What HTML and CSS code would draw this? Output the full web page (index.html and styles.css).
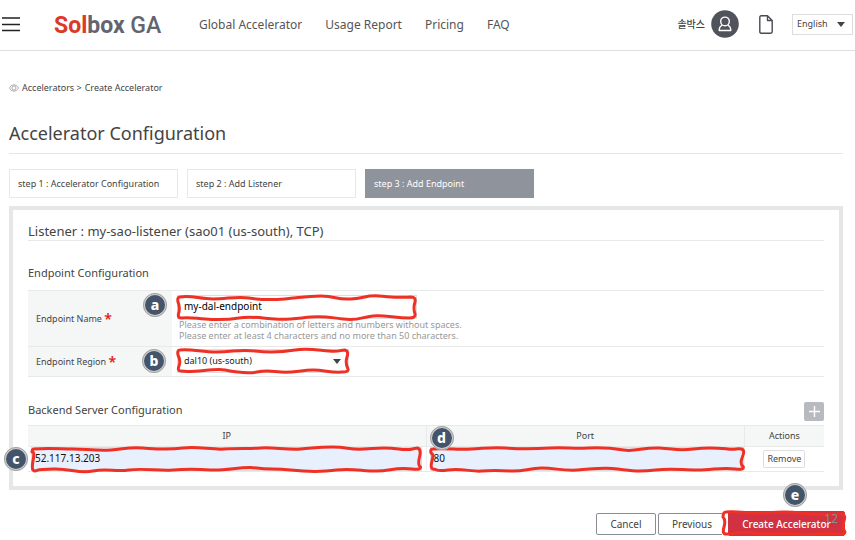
FILE: index.html
```html
<!DOCTYPE html>
<html lang="en">
<head>
<meta charset="utf-8">
<title>Solbox GA</title>
<link rel="stylesheet" href="styles.css">
</head>
<body>
<header class="topbar">
  <button class="menu" type="button" aria-label="Menu">
    <svg width="18" height="15" viewBox="0 0 18 15"><path d="M0 1h18M0 7.5h18M0 13.5h18" stroke="#222" stroke-width="1.3"/></svg>
  </button>
  <a class="logo" href="#"><span class="logo-accent">Sol</span>box <span class="logo-ga">GA</span></a>
  <nav class="nav">
    <a href="#">Global Accelerator</a>
    <a href="#">Usage Report</a>
    <a href="#">Pricing</a>
    <a href="#">FAQ</a>
  </nav>
  <div class="account">
    <span class="user">솔박스</span>
    <svg class="avatar" width="28" height="28" viewBox="0 0 28 28"><circle cx="14" cy="14" r="13.8" fill="#50535b"/><g fill="none" stroke="#fff" stroke-width="1.4" stroke-linejoin="round"><circle cx="14" cy="11.4" r="4.3"/><path d="M11.300 15.200C9.300 16 8.200 17.800 8.200 20.500H19.800C19.800 17.800 18.700 16 16.700 15.200"/></g></svg>
    <svg class="doc" width="14" height="19" viewBox="0 0 14 19"><path d="M.8 2.200Q.8 .8 2.200 .8H8.500L13.200 5.500V16.800Q13.200 18.200 11.800 18.200H2.200Q.8 18.200 .8 16.800ZM8.500 .8V5.500H13.200" fill="none" stroke="#484b52" stroke-width="1.4" stroke-linejoin="round"/></svg>
    <span class="pick lang"><select aria-label="Language"><option>English</option></select></span>
  </div>
</header>

<main class="page">
  <nav class="crumbs" aria-label="Breadcrumb">
    <svg width="10" height="8" viewBox="0 0 10 8" fill="none" stroke="#777" stroke-width=".6"><path d="M.4 4Q2.200 .7 5 .7T9.600 4Q7.800 7.300 5 7.300T.4 4Z"/><circle cx="5" cy="4" r="2"/></svg>
    <a href="#">Accelerators &gt;</a>
    <span>Create Accelerator</span>
  </nav>
  <h1>Accelerator Configuration</h1>
  <ol class="steps">
    <li>step 1 : Accelerator Configuration</li>
    <li>step 2 : Add Listener</li>
    <li class="current">step 3 : Add Endpoint</li>
  </ol>

  <section class="panel">
    <h2>Listener : my-sao-listener (sao01 (us-south), TCP)</h2>
    <h3 class="first">Endpoint Configuration</h3>
    <table class="form">
      <tr>
        <th scope="row"><label for="name">Endpoint Name <b>*</b></label><span class="badge badge-a">a</span></th>
        <td>
          <div class="marked name">
            <input id="name" type="text" value="my-dal-endpoint">
            <svg class="mark" viewBox="0 0 240 24" preserveAspectRatio="none"><path d="M3 2C15 0 22 4 36 4S60 1 72 3S94 5 108 4S128 1 144 1S158 5 174 4S188 0 202 1S220 3 234 2Q239 2 238 7Q236 13 238 19Q239 23 232 23C218 23 208 20 196 21S182 26 166 24S146 21 134 22S112 25 98 24S74 21 62 23S40 25 28 24S12 22 4 23Q0 23 2 17Q3 11 1 7Q0 2 3 2Z"/></svg>
          </div>
          <p class="hint">Please enter a combination of letters and numbers without spaces.<br>Please enter at least 4 characters and no more than 50 characters.</p>
        </td>
      </tr>
      <tr>
        <th scope="row"><label for="region">Endpoint Region <b>*</b></label><span class="badge badge-b">b</span></th>
        <td>
          <div class="marked pick region">
            <select id="region"><option>dal10 (us-south)</option></select>
            <svg class="mark" viewBox="0 0 172 24" preserveAspectRatio="none"><path d="M3 1C16 0 24 3 40 3S62 0 78 2S106 3 118 1S140 1 152 2S162 1 168 1Q172 2 170 8T171 20Q172 23 165 23C154 24 148 21 136 21S116 24 104 23S90 21 80 23S58 23 48 21S16 24 4 22Q0 22 2 17T1 6Q0 1 3 1Z"/></svg>
          </div>
        </td>
      </tr>
    </table>

    <div class="subhead">
      <h3>Backend Server Configuration</h3>
      <button class="add" type="button" aria-label="Add server"><svg width="11" height="11" viewBox="0 0 11 11"><path d="M5.500 0V11M0 5.500H11" stroke="#fff" stroke-width="1.400"/></svg></button>
    </div>
    <table class="servers">
      <thead><tr><th class="ip">IP</th><th>Port<span class="badge badge-d">d</span></th><th class="actions">Actions</th></tr></thead>
      <tbody><tr>
        <td><div class="marked cell">
          <input type="text" aria-label="IP" value="52.117.13.203">
          <svg class="mark" viewBox="0 0 391 24" preserveAspectRatio="none"><path d="M3 2C18 1 30 2 42 2S66 4 80 3S96 0 112 1S136 3 152 1S180 3 194 2S218 2 230 1S256 3 270 2S286 0 302 0S318 3 334 2S354 0 368 2S382 1 387 1Q391 2 389 10T390 20Q390 23 382 22C364 20 360 24 346 24S320 21 306 23S278 25 260 23S240 23 226 21S196 24 180 23S156 22 142 23S112 21 98 23S76 21 62 24S38 21 22 22S10 22 4 24Q0 24 2 14T1 5Q1 2 3 2Z"/></svg>
          <span class="badge badge-c">c</span>
        </div></td>
        <td><div class="marked cell port">
          <input type="text" aria-label="Port" value="80">
          <svg class="mark" viewBox="0 0 315 24" preserveAspectRatio="none"><path d="M3 2C18 1 26 3 42 2S62 0 76 1S104 2 120 1S144 2 158 1S182 1 194 3S214 0 230 1S248 4 264 2S288 1 298 2S306 1 312 2Q316 3 313 10T314 20Q314 23 306 22C292 20 284 23 268 23S242 21 226 23S202 24 188 22S164 22 148 23S126 21 112 21S94 25 80 24S62 23 52 24S32 21 18 23S8 22 3 22Q0 21 2 14T1 6Q0 2 3 2Z"/></svg>
        </div></td>
        <td><button class="remove" type="button">Remove</button></td>
      </tr></tbody>
    </table>
  </section>

  <div class="buttons">
    <button type="button">Cancel</button>
    <button type="button">Previous</button>
    <div class="marked create">
      <button class="primary" type="button">Create Accelerator</button>
      <svg class="mark" viewBox="0 0 124 25" preserveAspectRatio="none"><path d="M4 1C18 0 28 3 42 2S64 0 78 2S104 3 120 3Q124 4 122 10T123 21Q123 24 116 23C100 21 90 25 74 23S48 25 32 22S14 24 4 23Q0 23 2 16T1 6Q1 1 4 1Z"/></svg>
      <span class="badge badge-e">e</span>
      <span class="page-number">12</span>
    </div>
  </div>
</main>
</body>
</html>
```
FILE: styles.css
```css
* { box-sizing: border-box; }
body {
  margin: 0;
  background: #fff;
  color: #444;
  font: 9px/12px "Noto Sans", "Noto Sans CJK KR", sans-serif;
}
a { color: inherit; text-decoration: none; }
button, input, select { font: inherit; color: inherit; margin: 0; }
h1, h2, h3, p, ol { margin: 0; padding: 0; font-weight: 400; }
svg { display: block; flex: none; }
table { width: 100%; border-collapse: collapse; table-layout: fixed; }
th { font-weight: 400; }
th, td { padding: 0; position: relative; }

.topbar {
  display: flex;
  align-items: center;
  height: 51px;
  padding: 0 2px 2px;
  border-bottom: 1px solid #dedede;
}
.menu { padding: 0; border: 0; background: none; }
.logo {
  margin-left: 34px;
  padding-top: 3px;
  width: 145px;
  font: 700 23px/28px Roboto, sans-serif;
  color: #62656e;
  white-space: nowrap;
}
.logo-accent { color: #db3b26; }
.logo-ga { font-weight: 500; }
.nav { display: flex; gap: 23px; padding-top: 2px; font-size: 12px; line-height: 16px; color: #555; white-space: nowrap; }
.account { display: flex; align-items: center; margin-left: auto; }
.user { font-size: 10px; font-weight: 500; margin-right: 6px; color: #444; }
.doc { margin: 0 19px 0 20px; }

.pick { display: block; position: relative; }
.pick select { appearance: none; width: 100%; border: 1px solid #ddd; border-radius: 0; background: #fff; padding: 0 4px; }
.pick::after {
  content: "";
  position: absolute;
  right: 8px;
  top: 50%;
  margin-top: -2px;
  border: 4px solid transparent;
  border-top: 5px solid #444;
  border-bottom: 0;
}
.lang { width: 61px; }
.lang select { height: 21px; }

.page { padding: 31px 12px 0 9px; }
.crumbs { display: flex; align-items: center; gap: 3px; }
h1 { font-size: 18px; line-height: 24px; margin-top: 27px; padding-bottom: 8px; border-bottom: 1px solid #e6e6e6; }
.steps { display: flex; gap: 9px; margin: 15px 0 8px; list-style: none; }
.steps li { width: 169px; padding: 8px; line-height: 11px; border: 1px solid #e8e8e8; }
.steps .current { background: #8f939b; border-color: #8f939b; color: #fff; }

.panel { border: 4px solid #e5e7e7; padding: 13px 15px 14px; }
h2 { font-size: 13px; line-height: 16px; padding-bottom: 1px; border-bottom: 1px solid #e8e8e8; }
h3 { font-size: 11px; line-height: 16px; }
.first { margin: 24px 0 9px; }

.form tr { border: solid #e8eaea; border-width: 1px 0; height: 30px; }
.form tr:first-child { height: 56px; }
.form th { width: 144px; padding-left: 8px; text-align: left; background: #f5f7f7; }
.form td { padding: 0 0 2px 5px; }
.form b { color: #e02020; font-size: 14px; font-weight: 600; line-height: 12px; vertical-align: -2px; }
.marked { position: relative; }
.mark { position: absolute; inset: 0; width: 100%; height: 100%; overflow: visible; pointer-events: none; }
.mark path { fill: none; stroke: #ee3124; stroke-width: 3; stroke-linejoin: round; vector-effect: non-scaling-stroke; }
.name { width: 240px; }
.name input { display: block; width: 100%; height: 24px; padding: 0 6px 2px; border: 1px solid #ddd; font-size: 10px; color: #000; }
.hint { padding-left: 2px; line-height: 11px; color: #999; }
.region { width: 172px; }
.region select { display: block; height: 24px; padding: 0 6px; color: #222; }

.subhead { display: flex; align-items: flex-start; justify-content: space-between; margin-top: 25px; padding-bottom: 4px; }
.add { display: grid; place-items: center; width: 20px; height: 19px; padding: 0; border: 0; border-radius: 2px; background: #b7babf; }
.servers th { height: 21px; background: #f5f7f7; border: solid #e8eaea; border-width: 1px 0; }
.servers th + th { border-left-width: 1px; }
.servers .ip { width: 50%; }
.servers .actions { width: 10%; }
.servers td { height: 25px; border-bottom: 1px solid #e8eaea; text-align: center; }
.servers td + td { border-left: 1px solid #f0f0f0; }
.cell { margin: 0 4px 0 3px; }
.port { margin-right: 0; }
.cell input { display: block; width: 100%; height: 24px; padding: 0 3px 3px; border: 1px solid #ddd; background: #e8effd; color: #111; font-size: 10px; }
.remove { height: 18px; padding: 0 3px; border: 1px solid #ddd; border-radius: 2px; background: #fff; }

.buttons { display: flex; gap: 2px; margin-top: 21px; margin-right: -3px; justify-content: flex-end; align-items: center; font-size: 10px; }
.buttons button { height: 22px; width: 60px; padding: 0; border: 1px solid #898d96; border-radius: 2px; background: #fff; }
.buttons button + button { width: 68px; }
.create { margin-left: -6px; padding: 0 1px 0 6px; background: #fff; }
.buttons .primary { display: block; width: 117px; height: 25px; border-color: #d13140; background: #d13140; color: #fff; font-weight: 500; }
.page-number { position: absolute; right: 8px; top: 0; font-size: 12px; line-height: 16px; color: #8b8b8b; }

.badge {
  position: absolute;
  z-index: 2;
  width: 24px;
  height: 24px;
  border: 2px solid #d0d0d0;
  outline: 1px solid #a0a0a0;
  outline-offset: -1px;
  border-radius: 50%;
  background: #44546a;
  color: #fff;
  font-size: 14px;
  font-weight: 800;
  line-height: 20px;
  text-align: center;
}
.badge-a { right: 5px; top: 2px; }
.badge-b { right: 6px; top: 2px; }
.badge-c { left: -27px; top: 0; }
.badge-d { left: 3px; top: 0; }
.badge-e { left: 61px; top: -28px; }
```
